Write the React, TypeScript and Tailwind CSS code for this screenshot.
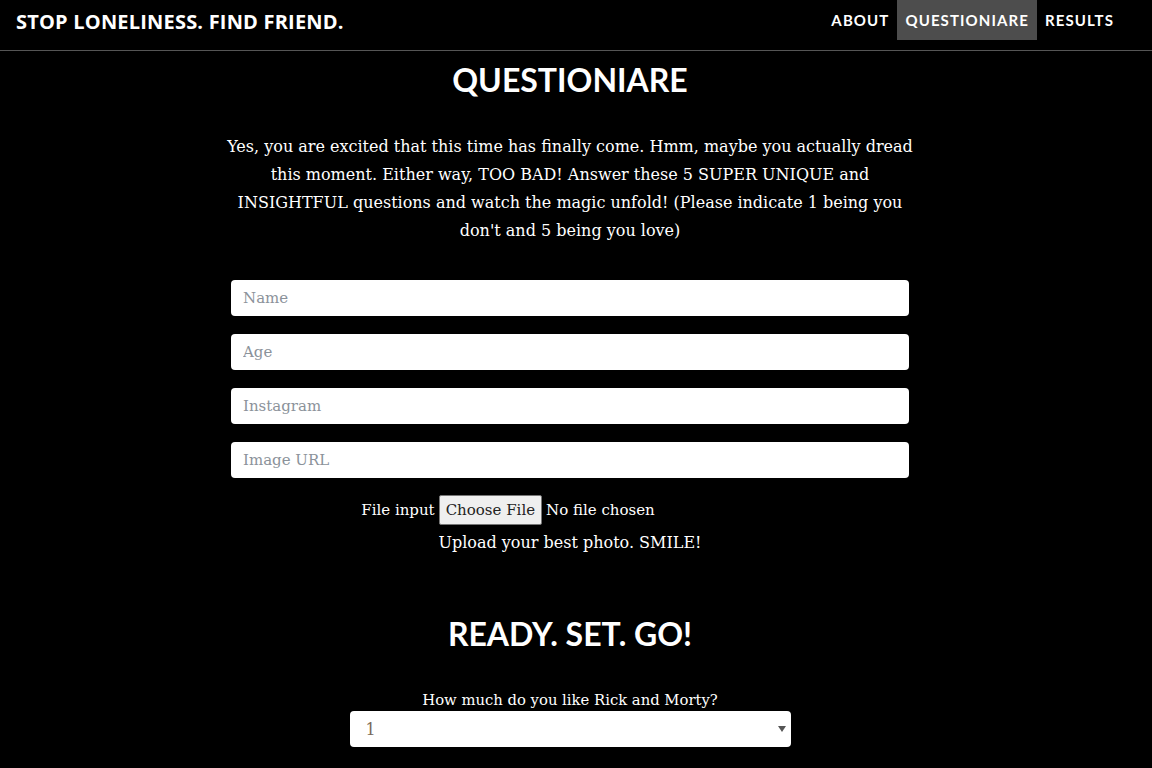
import React from "react";

const navLinks = [
  { name: "ABOUT", active: false },
  { name: "QUESTIONIARE", active: true },
  { name: "RESULTS", active: false },
];

const fields = ["Name", "Age", "Instagram", "Image URL"];

export default function App() {
  return (
    <div className="min-h-screen bg-black text-white font-['DejaVu_Serif',serif]">
      {/* Navbar */}
      <nav className="h-[51px] border-b border-[#555] flex items-start justify-between pl-4 pr-[30px]">
        <span className="mt-[7px] text-[20px] font-bold tracking-[0.2px] font-['Open_Sans',sans-serif]">
          STOP LONELINESS. FIND FRIEND.
        </span>
        <ul className="flex font-['Lato',sans-serif] font-bold text-[15px] tracking-[1.1px]">
          {navLinks.map((link) => (
            <li
              key={link.name}
              className={`h-10 flex items-center px-2 ${link.active ? "bg-[#4d4d4d]" : ""}`}
            >
              {link.name}
            </li>
          ))}
        </ul>
      </nav>

      {/* Main */}
      <main className="flex flex-col items-center pr-3">
        <h1 className="mt-[9px] text-[32px] leading-[40px] font-bold font-['Lato',sans-serif]">
          QUESTIONIARE
        </h1>
        <p className="mt-[33px] w-[702px] text-center text-[16px] leading-[28px]">
          Yes, you are excited that this time has finally come. Hmm, maybe you actually dread this
          moment. Either way, TOO BAD! Answer these 5 SUPER UNIQUE and INSIGHTFUL questions and
          watch the magic unfold! (Please indicate 1 being you don't and 5 being you love)
        </p>

        {/* Profile fields */}
        <form className="mt-[35px] w-[678px] flex flex-col gap-[18px]">
          {fields.map((f) => (
            <input
              key={f}
              placeholder={f}
              className="h-9 w-full rounded bg-white px-3 text-[15px] text-black placeholder:text-[#8b929a] outline-none"
            />
          ))}
        </form>

        <div className="mt-[17px] mr-[124px] flex items-center gap-1 text-[15px]">
          <span>File input</span>
          <button className="h-[30px] px-[6px] bg-[#efefef] border border-[#767676] text-[#222] text-[15px] rounded-[2px]">
            Choose File
          </button>
          <span>No file chosen</span>
        </div>
        <p className="mt-[4px] text-[16px] leading-[28px]">Upload your best photo. SMILE!</p>

        <h2 className="mt-[57px] text-[32px] leading-[40px] font-bold font-['Lato',sans-serif]">
          READY. SET. GO!
        </h2>

        {/* Question */}
        <label className="mt-[35px] text-[14.8px] leading-[22px]">How much do you like Rick and Morty?</label>
        <div className="relative w-[441px] h-9 bg-white rounded">
          <span className="absolute left-4 top-[7px] text-[16px] text-[#7a6a5a]">1</span>
          <svg className="absolute right-[5px] top-[15px]" width="8" height="6" viewBox="0 0 8 6">
            <path d="M0 0h8L4 6z" fill="#555" />
          </svg>
        </div>
      </main>
    </div>
  );
}
